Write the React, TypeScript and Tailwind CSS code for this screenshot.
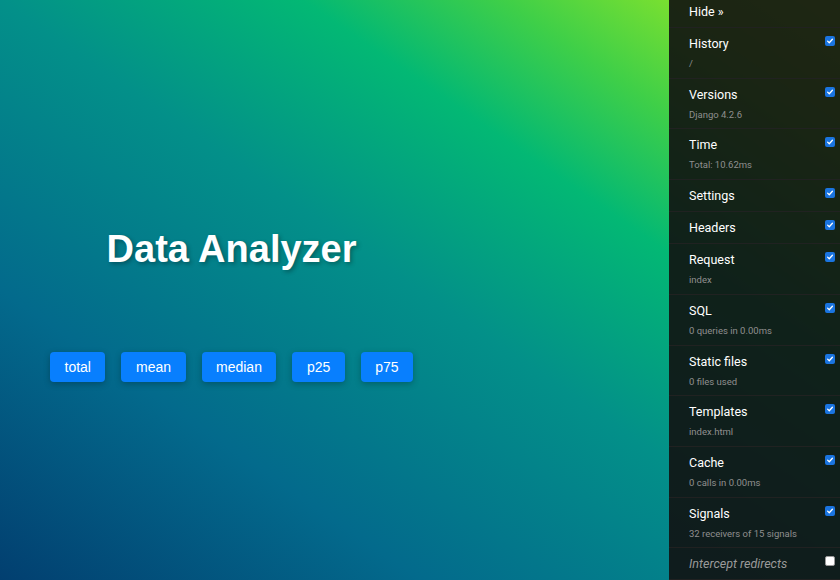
import React from "react";

type Panel = { title: string; sub?: string; checked: boolean; italic?: boolean };

const panels: Panel[] = [
  { title: "History", sub: "/", checked: true },
  { title: "Versions", sub: "Django 4.2.6", checked: true },
  { title: "Time", sub: "Total: 10.62ms", checked: true },
  { title: "Settings", checked: true },
  { title: "Headers", checked: true },
  { title: "Request", sub: "index", checked: true },
  { title: "SQL", sub: "0 queries in 0.00ms", checked: true },
  { title: "Static files", sub: "0 files used", checked: true },
  { title: "Templates", sub: "index.html", checked: true },
  { title: "Cache", sub: "0 calls in 0.00ms", checked: true },
  { title: "Signals", sub: "32 receivers of 15 signals", checked: true },
  { title: "Intercept redirects", checked: false, italic: true },
];

function Check({ checked }: { checked: boolean }) {
  if (!checked) {
    return <span className="block h-[10px] w-[10px] shrink-0 rounded-[2px] border border-[#999] bg-white" />;
  }
  return (
    <span className="flex h-[10px] w-[10px] shrink-0 items-center justify-center rounded-[2px] bg-[#1a74e0]">
      <svg viewBox="0 0 10 10" className="h-[8px] w-[8px]">
        <path d="M2 5.2 L4.1 7.2 L8 2.8" fill="none" stroke="white" strokeWidth="1.6" strokeLinecap="round" strokeLinejoin="round" />
      </svg>
    </span>
  );
}

const buttons = ["total", "mean", "median", "p25", "p75"];

export default function App() {
  return (
    <div className="relative h-[580px] w-[840px] overflow-hidden bg-[linear-gradient(to_top_right,#023f70_0%,#036a8c_25%,#039089_50%,#03b874_68%,#3fcf48_80%,#7ae030_90%,#9de62a_100%)]">
      <div className="flex w-[669px] flex-col items-start pl-[50px] pt-[227px]">
        <div className="flex flex-col items-center">
          <h1
            className="text-[38px] font-bold leading-[44px] text-white [text-shadow:2px_2px_4px_rgba(0,0,0,0.3)]"
            style={{ fontFamily: '"Liberation Sans", Arial, sans-serif' }}
          >
            Data Analyzer
          </h1>
          <div className="mt-[81px] flex gap-[16px]">
            {buttons.map((b) => (
              <button
                key={b}
                className="h-[30px] rounded-[4px] bg-[#087ffe] px-[14.5px] text-[14px] text-white shadow-[0_2px_6px_rgba(0,0,0,0.25)]"
                style={{ fontFamily: '"Liberation Sans", Arial, sans-serif' }}
              >
                {b}
              </button>
            ))}
          </div>
        </div>
      </div>

      <div
        className="absolute bottom-0 right-0 top-0 w-[171px] bg-[#111111]/90"
        style={{ fontFamily: 'Roboto, "Noto Sans", sans-serif' }}
      >
        <ul>
          <li className="border-b border-[#222222]/90 pb-[7px] pl-[20px] pt-[4px] text-[12.5px] leading-[16px] text-white">
            Hide »
          </li>
          {panels.map((p) => (
            <li key={p.title} className="flex items-start justify-between border-b border-[#222222]/90 pb-[7px] pl-[20px] pr-[5px] pt-[8px]">
              <div className="flex flex-col">
                <span className={`text-[12.5px] leading-[16px] ${p.italic ? "italic text-[#9a9a9a]" : "text-white"}`}>{p.title}</span>
                {p.sub && <span className="mt-[5px] text-[9.5px] leading-[13.7px] text-[#8f8f8f]">{p.sub}</span>}
              </div>
              <Check checked={p.checked} />
            </li>
          ))}
        </ul>
      </div>
    </div>
  );
}
